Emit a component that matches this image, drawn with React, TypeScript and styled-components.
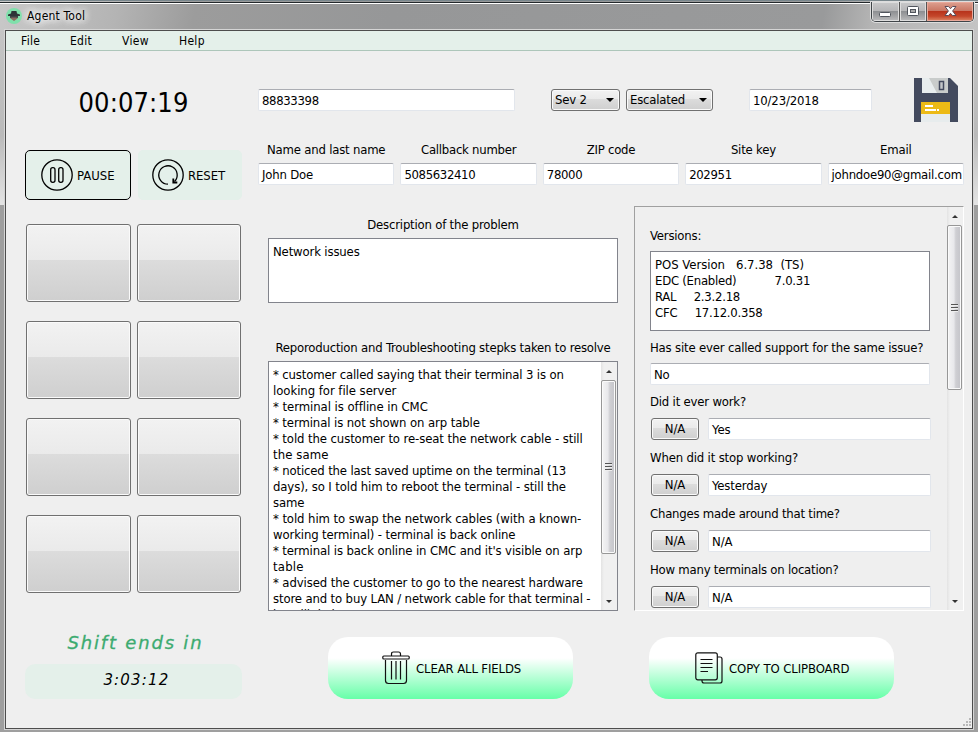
import React from 'react';
import styled, { createGlobalStyle } from 'styled-components';

const Global = createGlobalStyle`
  *{box-sizing:border-box}
  body{margin:0;overflow:hidden;background:#9f9f9f}
  button{font:inherit;color:inherit;margin:0;padding:0}
`;

const Frame = styled.div`
  width:978px;height:732px;display:flex;flex-direction:column;color:#000;
  font:13px/16px "DejaVu Sans Condensed","DejaVu Sans",sans-serif;font-stretch:condensed;
  border-top:1px solid #78868c;padding:0 5px 3px;
  background:
    linear-gradient(#fff,#fff) 0 2px/978px 1px no-repeat,
    linear-gradient(#22282b,#22282b) 0 1px/978px 1px no-repeat,
    linear-gradient(100deg,#c8c8c8,#b4b4b4 12%,#9c9c9c 20%,#969798 40%,#999a9b 84%,#b4b4b4 89%,#c4c4c4) 0 0/978px 30px no-repeat,
    linear-gradient(#c5c5c5,#bababa 60%,#e4e4e4) 0 30px/978px 174px no-repeat,
    #9f9f9f;
`;
const TitleBar = styled.header`
  height:29px;flex:none;display:flex;align-items:flex-start;
`;
const Logo = styled.svg`margin:7px 0 0 1px;width:16px;height:16px;flex:none`;
const Title = styled.span`
  margin:7px auto 0 5px;font-size:12px;letter-spacing:.2px;white-space:pre;
  text-shadow:0 0 6px #fff,0 0 8px #fff,0 0 10px #eee,0 0 14px #eee;
`;
const WinControls = styled.div`
  display:flex;height:20px;margin:1px -1px 0 0;border:1px solid #3f4448;border-top:0;
  border-radius:0 0 5px 5px;overflow:hidden;box-shadow:0 0 0 1px #ddd;
`;
const WinButton = styled.button<{ $w: number; $divider?: boolean; $close?: boolean }>`
  width:${p => p.$w}px;height:19px;border:0;border-left:${p => (p.$divider ? '1px solid #555' : 0)};
  display:flex;align-items:center;justify-content:center;
  box-shadow:inset 0 0 0 1px ${p => (p.$close ? '#e9a99b' : '#ddd')};
  background:${p => p.$close
    ? 'linear-gradient(#dda090,#c97562 48%,#b8341c 50%,#c4472b 75%,#dd8a68)'
    : 'linear-gradient(#c9c9ca,#b5b5b7 48%,#8e9093 50%,#a3a4a6 75%,#bcbcbe)'};
`;
const Client = styled.div`
  flex:1;min-height:0;display:flex;flex-direction:column;background:#efefef;
  border:1px solid #4d4d4d;outline:1px solid #d5d5d5;width:968px;
`;
const MenuBar = styled.nav`
  height:20px;flex:none;display:flex;align-items:center;background:#e4f0ea;border-bottom:1px solid #adc6ba;
  padding-left:15px;padding-top:1px;font-size:12px;
`;
const MenuItem = styled.span<{ $w: number }>`width:${p => p.$w}px;letter-spacing:.3px`;
const Content = styled.main`flex:1;min-height:0;display:flex;padding-left:19px`;

const Side = styled.aside`width:217px;flex:none;display:flex;flex-direction:column`;
const Timer = styled.div`
  margin-top:35px;height:34px;line-height:34px;font-size:27px;text-align:center;letter-spacing:.1px;padding-right:0;
`;
const TimerButtons = styled.div`display:flex;gap:7px;margin-top:30px`;
const TimerButton = styled.button<{ $active?: boolean }>`
  width:${p => (p.$active ? 106 : 104)}px;height:50px;border-radius:5px;background:#e4f0ea;
  border:1px solid ${p => (p.$active ? '#000' : '#e4f0ea')};
  display:flex;align-items:center;gap:4px;padding-left:${p => (p.$active ? 15 : 13)}px;
  letter-spacing:${p => (p.$active ? 0 : -0.1)}px;white-space:pre;
  svg{flex:none}
`;
const Caption = styled.span`padding-top:2px`;
const Pads = styled.div`
  display:grid;grid-template-columns:105px 104px;grid-auto-rows:78px;gap:19px 6px;margin:24px 0 0 1px;
`;
const raised = `
  border:1px solid #707070;border-radius:3px;box-shadow:inset 0 0 0 1px #fafafa;
  background:linear-gradient(#f2f2f2,#eaeaea 46%,#dcdcdc 46%,#cfcfcf);
`;
const Pad = styled.button`${raised}`;
const ShiftLabel = styled.div`
  margin-top:36px;height:28px;line-height:28px;text-align:center;color:#3cab70;white-space:pre;
  font-family:"Segoe Script","Lucida Handwriting","DejaVu Sans",sans-serif;font-stretch:normal;font-style:italic;
  font-size:18px;letter-spacing:1.8px;padding-left:4px;-webkit-text-stroke:.3px #3cab70;
`;
const ShiftTime = styled.div`
  margin-top:7px;height:35px;line-height:33px;border-radius:10px;background:#e4f0ea;text-align:center;
  font-family:"Segoe Script","DejaVu Sans",sans-serif;font-stretch:normal;font-style:italic;
  font-size:15px;letter-spacing:1.2px;padding-left:6px;
`;

const Main = styled.div`width:706px;flex:none;margin-left:16px;display:flex;flex-direction:column`;
const TopRow = styled.div`display:flex;align-items:center;height:44px;margin-top:27px`;
const Field = styled.div<{ $w?: number; $ml?: number; $ls?: number }>`
  height:22px;line-height:21px;background:#fff;border:1px solid #e2e6ec;border-top-color:#abadb3;border-radius:2px;
  padding-left:3px;white-space:pre;overflow:hidden;flex:none;
  ${p => (p.$w ? `width:${p.$w}px;` : '')}
  margin-left:${p => p.$ml ?? 0}px;letter-spacing:${p => p.$ls ?? -0.35}px;
`;
const Select = styled.button<{ $w: number; $ml: number }>`
  ${raised}
  width:${p => p.$w}px;margin-left:${p => p.$ml}px;height:22px;display:flex;align-items:center;
  justify-content:space-between;padding:0 5px 0 3px;letter-spacing:-.2px;white-space:pre;
`;
const Floppy = styled.svg`margin-left:42px;flex:none`;
const Details = styled.div`display:grid;grid-template-columns:repeat(5,minmax(0,1fr));column-gap:6px;margin-top:20px`;
const Label = styled.div<{ $h?: number; $pt?: number; $left?: boolean; $ls?: number }>`
  height:${p => p.$h ?? 21}px;padding-top:${p => p.$pt ?? 0}px;text-align:${p => (p.$left ? 'left' : 'center')};
  letter-spacing:${p => p.$ls ?? -0.2}px;white-space:pre;
`;
const Columns = styled.div`display:flex;margin-top:21px`;
const Notes = styled.section`width:350px;margin:11px 0 0 10px;display:flex;flex-direction:column`;
const TextArea = styled.div<{ $h: number }>`
  height:${p => p.$h}px;border:1px solid #82848c;background:#fff;display:flex;overflow:hidden;flex:none;
`;
const TextBody = styled.div`flex:1;padding:5px 0 0 4px;white-space:pre;overflow:hidden`;
const Line = styled.div<{ $ls?: number }>`height:16px;letter-spacing:${p => p.$ls ?? -0.15}px`;
const Track = styled.div`
  width:16px;flex:none;background:linear-gradient(90deg,#e3e3e3,#f0f0f0 3px);display:flex;flex-direction:column;align-items:flex-start;
`;
const ArrowBox = styled.div<{ $end?: boolean }>`
  width:16px;height:18px;display:flex;align-items:center;justify-content:center;margin-top:${p => (p.$end ? 'auto' : 0)};
`;
const Thumb = styled.div<{ $h: number }>`
  width:15px;height:${p => p.$h}px;border:1px solid #979797;border-radius:2px;box-shadow:inset 0 0 0 1px #fafafa;
  background:linear-gradient(90deg,#f4f4f4,#e8e8eb 45%,#cfcfd3 60%,#c4c4c9);
  display:flex;align-items:center;justify-content:center;
`;
const Panel = styled.section`
  width:330px;height:405px;margin-left:16px;display:flex;border:1px solid #fff;border-top-color:#a0a0a0;border-left-color:#a0a0a0;
`;
const PanelBody = styled.div`flex:1;padding:21px 17px 0 15px;overflow:hidden`;
const Question = styled.div`margin-top:9px`;
const AnswerRow = styled.div`display:flex;gap:9px;margin:0 -1px 10px 1px`;
const NaButton = styled.button`${raised} width:48px;height:22px;flex:none;letter-spacing:-.1px`;
const Actions = styled.footer`display:flex;gap:76px;margin:26px 0 0 70px`;
const ActionButton = styled.button<{ $pl: number; $ls: number }>`
  width:245px;height:62px;border:0;border-radius:20px;background:linear-gradient(#fff 34%,#66ffa8);
  display:flex;align-items:center;gap:6px;padding-left:${p => p.$pl}px;letter-spacing:${p => p.$ls}px;white-space:pre;
  svg{flex:none}
`;
const Grip = styled.svg`align-self:flex-end;margin:0 0 1px -1px;flex:none`;

const ScrollBar = ({ thumb }: { thumb: number }) => (
  <Track>
    <ArrowBox><svg width="6" height="3"><path d="M0 3 3 0l3 3z" fill="#333" /></svg></ArrowBox>
    <Thumb $h={thumb}>
      <svg width="7" height="8" shapeRendering="crispEdges">
        <path d="M0 .5h7M0 3.500h7M0 6.500h7" stroke="#555" />
        <path d="M0 1.500h7M0 4.500h7M0 7.500h7" stroke="#eee" />
      </svg>
    </Thumb>
    <ArrowBox $end><svg width="6" height="3"><path d="M0 0h6L3 3z" fill="#333" /></svg></ArrowBox>
  </Track>
);
const Caret = () => <svg width="8" height="4"><path d="M0 0h8L4 4z" fill="#000" /></svg>;

const details: [string, string, number, number][] = [
  ['Name and last name', 'John Doe', -0.2, -0.2],
  ['Callback number', '5085632410', -0.25, -0.35],
  ['ZIP code', '78000', -0.25, -0.35],
  ['Site key', '202951', -0.2, -0.35],
  ['Email', 'johndoe90@gmail.com', -0.2, -0.24],
];
const versions: [string, number][] = [
  ['POS Version   6.7.38  (TS)', -0.03],
  ['EDC (Enabled)           7.0.31', -0.25],
  ['RAL     2.3.2.18', -0.25],
  ['CFC     17.12.0.358', -0.25],
];
const steps: [string, number][] = [
  ['* customer called saying that their terminal 3 is on', -0.15],
  ['looking for file server', -0.05],
  ['* terminal is offline in CMC', -0.05],
  ['* terminal is not shown on arp table', -0.1],
  ['* told the customer to re-seat the network cable - still', -0.1],
  ['the same', 0.1],
  ['* noticed the last saved uptime on the terminal (13', -0.16],
  ['days), so I told him to reboot the terminal - still the', -0.12],
  ['same', -0.1],
  ['* told him to swap the network cables (with a known-', -0.09],
  ['working terminal) - terminal is back online', -0.13],
  ["* terminal is back online in CMC and it's visible on arp", -0.12],
  ['table', 0.2],
  ['* advised the customer to go to the nearest hardware', -0.11],
  ['store and to buy LAN / network cable for that terminal -', -0.14],
  ['he will do it', -0.1],
];
const questions: [string, string, number, number][] = [
  ['Did it ever work?', 'Yes', -0.2, 0],
  ['When did it stop working?', 'Yesterday', -0.17, -0.15],
  ['Changes made around that time?', 'N/A', -0.22, -0.1],
  ['How many terminals on location?', 'N/A', -0.22, -0.1],
];

export default function App() {
  return (
    <Frame>
      <Global />
      <TitleBar>
        <Logo viewBox="0 0 16 16">
          <circle cx="8" cy="8" r="8" fill="#7fe0ab" />
          <path d="M4.500 7h7v3.500L8 13l-3.500-2.500z" fill="#8b6b60" />
          <path d="M2 6.500 5 5.500 5.500 3h5l.5 2.500 3 1v1.500H2z" fill="#2e3338" />
          <path d="M4 8h8v2l-2-.5H6L4 10z" fill="#3c4146" />
        </Logo>
        <Title>Agent Tool</Title>
        <WinControls>
          <WinButton $w={27}>
            <svg width="13" height="12"><rect x=".5" y="6.500" width="11" height="4" rx="1" fill="#fff" stroke="#51555d" /></svg>
          </WinButton>
          <WinButton $w={27} $divider>
            <svg width="12" height="11"><rect x=".5" y=".5" width="11" height="9" rx="1" fill="#fff" stroke="#51555d" /><rect x="3.500" y="3.500" width="5" height="3" fill="#aaa" stroke="#51555d" /></svg>
          </WinButton>
          <WinButton $w={47} $close $divider>
            <svg width="13" height="11"><path d="M1 .5h3.500l2 2.200 2-2.200H12L8.600 5 12 9.500H8.500l-2-2.200-2 2.200H1L4.400 5z" fill="#fff" stroke="#5b4c58" /></svg>
          </WinButton>
        </WinControls>
      </TitleBar>
      <Client>
        <MenuBar>
          <MenuItem $w={49}>File</MenuItem><MenuItem $w={52}>Edit</MenuItem><MenuItem $w={57}>View</MenuItem><MenuItem $w={40}>Help</MenuItem>
        </MenuBar>
        <Content>
          <Side>
            <Timer>00:07:19</Timer>
            <TimerButtons>
              <TimerButton $active>
                <svg width="32" height="32" fill="none" stroke="#000" strokeWidth="1.300">
                  <circle cx="16" cy="16" r="15.200" /><rect x="9.700" y="8.700" width="4.300" height="14.600" rx="2" /><rect x="17.700" y="8.700" width="4.300" height="14.600" rx="2" />
                </svg>
                <Caption>PAUSE</Caption>
              </TimerButton>
              <TimerButton>
                <svg width="32" height="32" fill="none" stroke="#000" strokeWidth="1.300">
                  <circle cx="16" cy="16" r="15.200" />
                  <path d="M16 25.200A9.200 9.200 0 1 1 22.500 22.500" /><path d="M21.300 19.500v4h4" strokeWidth="1.800" />
                </svg>
                <Caption>RESET</Caption>
              </TimerButton>
            </TimerButtons>
            <Pads>{Array.from({ length: 8 }, (_, i) => <Pad key={i} />)}</Pads>
            <ShiftLabel>Shift ends in</ShiftLabel>
            <ShiftTime>3:03:12</ShiftTime>
          </Side>
          <Main>
            <TopRow>
              <Field $w={257}>88833398</Field>
              <Select $w={69} $ml={36}>Sev 2<Caret /></Select>
              <Select $w={87} $ml={6}>Escalated<Caret /></Select>
              <Field $w={123} $ml={36} $ls={-0.15}>10/23/2018</Field>
              <Floppy width="44" height="44" viewBox="0 0 44 44">
                <path d="M0 0h36l8 8v36H0z" fill="#434a5e" />
                <path d="M8 0h26v15H8z" fill="#c9cccb" /><path d="M8 0h7l8 15H8z" fill="#e8edee" />
                <rect x="25.500" y="3.500" width="4" height="8" fill="#c3c6c9" stroke="#434a5e" strokeWidth="1.500" />
                <path d="M7 24h29v12H7z" fill="#ecba16" /><path d="M7 36h29v8H7z" fill="#e7eced" />
                <path d="M11 28h8M11 32h11M23 32h2" stroke="#fff" strokeWidth="2" />
              </Floppy>
            </TopRow>
            <Details>
              {details.map(([l, v, a, b]) => (
                <div key={l}><Label $ls={a}>{l}</Label><Field $ls={b}>{v}</Field></div>
              ))}
            </Details>
            <Columns>
              <Notes>
                <Label>Description of the problem</Label>
                <TextArea $h={65}><TextBody><Line>Network issues</Line></TextBody></TextArea>
                <Label $h={58} $pt={37}>Reporoduction and Troubleshooting stepks taken to resolve</Label>
                <TextArea $h={250}>
                  <TextBody>{steps.map(([t, s]) => <Line key={t} $ls={s}>{t}</Line>)}</TextBody>
                  <ScrollBar thumb={174} />
                </TextArea>
              </Notes>
              <Panel>
                <PanelBody>
                  <Label $left $h={23}>Versions:</Label>
                  <TextArea $h={80}><TextBody>{versions.map(([t, s]) => <Line key={t} $ls={s}>{t}</Line>)}</TextBody></TextArea>
                  <Question>
                    <Label $left $h={23} $ls={-0.18}>Has site ever called support for the same issue?</Label>
                    <Field>No</Field>
                  </Question>
                  <Question>
                    {questions.map(([q, a, s, f]) => (
                      <div key={q}>
                        <Label $left $h={24} $ls={s}>{q}</Label>
                        <AnswerRow><NaButton>N/A</NaButton><Field $w={223} $ls={f}>{a}</Field></AnswerRow>
                      </div>
                    ))}
                  </Question>
                </PanelBody>
                <ScrollBar thumb={165} />
              </Panel>
            </Columns>
            <Actions>
              <ActionButton $pl={54} $ls={-0.13}>
                <svg width="28" height="34" fill="none" stroke="#111" strokeWidth="1.200">
                  <path d="M9.500 5V3q0-2 2-2h5q2 0 2 2v2" /><rect x=".8" y="5" width="26.400" height="3" rx="1" />
                  <path d="M3.500 9v20.500q0 3 3 3h15q3 0 3-3V9M9.500 10v18.500M14 10v18.500M18.500 10v18.500" />
                </svg>
                <Caption>CLEAR ALL FIELDS</Caption>
              </ActionButton>
              <ActionButton $pl={46} $ls={-0.1}>
                <svg width="28" height="33" fill="none" stroke="#111" strokeWidth="1.200">
                  <rect x=".8" y=".8" width="21.500" height="27" rx="2" /><path d="M22.500 5h2.500q2 0 2 2v22q0 2-2 2H9q-2 0-2-2v-1" />
                  <path d="M5.500 7.500h12M5.500 11.500h12M5.500 15.500h12M5.500 19.500h7.500" />
                </svg>
                <Caption>COPY TO CLIPBOARD</Caption>
              </ActionButton>
            </Actions>
          </Main>
          <Grip width="9" height="9" shapeRendering="crispEdges" fill="#b8b8b8">
            <path d="M6 0h2v2H6zM3 3h2v2H3zM6 3h2v2H6zM0 6h2v2H0zM3 6h2v2H3zM6 6h2v2H6z" />
          </Grip>
        </Content>
      </Client>
    </Frame>
  );
}
